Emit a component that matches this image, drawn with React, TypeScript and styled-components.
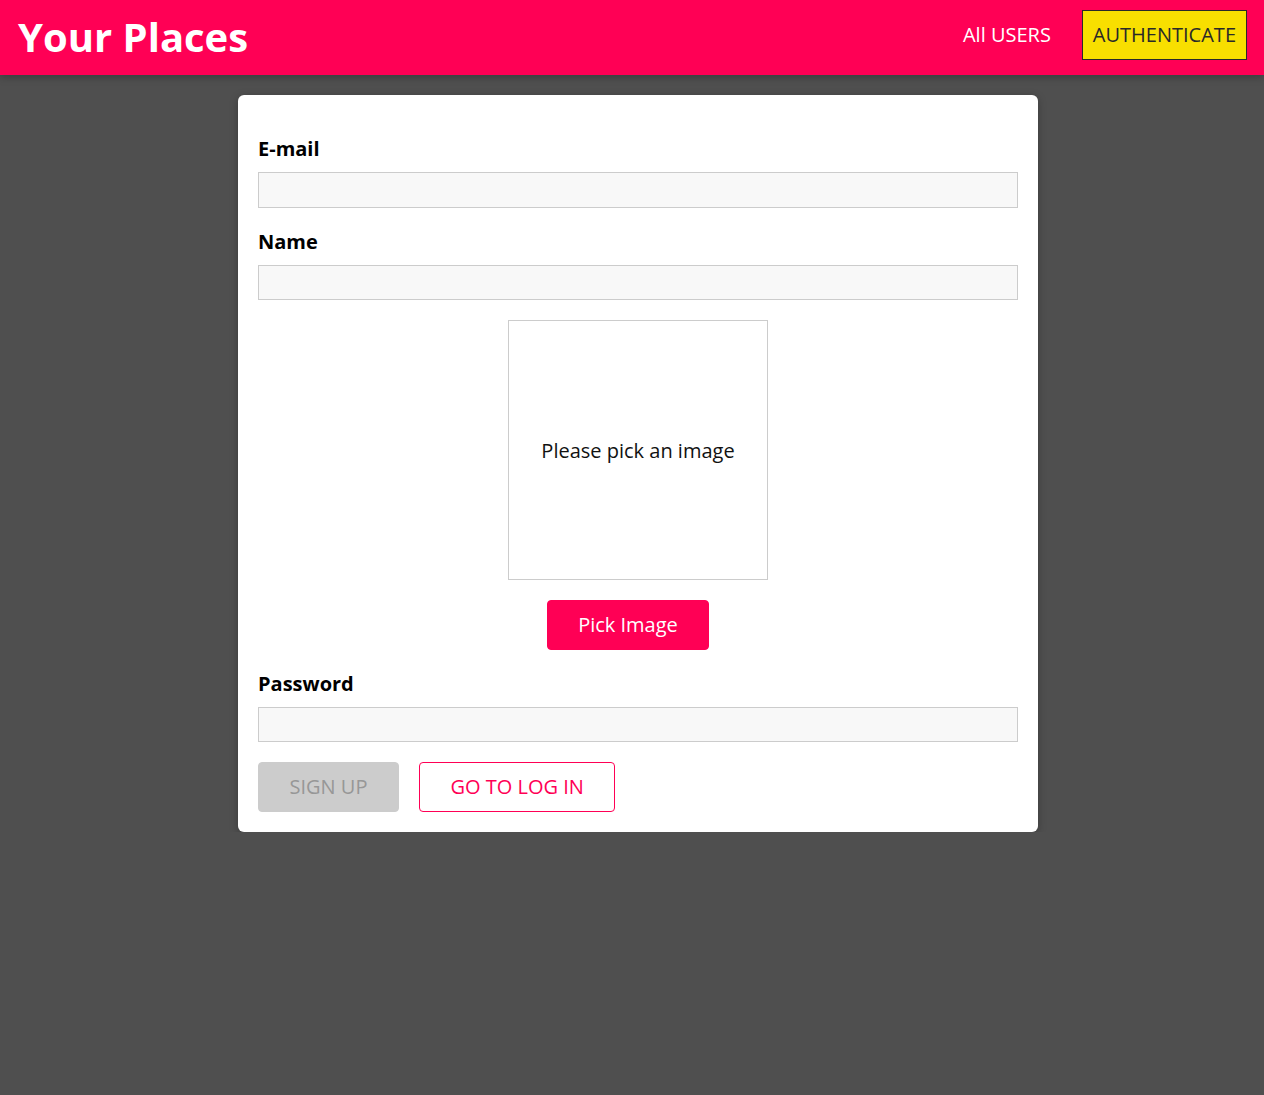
import React from "react";
import styled, { createGlobalStyle } from "styled-components";

const Global = createGlobalStyle`
  html, body { margin: 0; padding: 0; }
  body {
    background: #4f4f4f;
    font-family: "Open Sans", "Noto Sans", sans-serif;
    font-size: 20px;
  }
  * { box-sizing: border-box; }
`;

const Header = styled.header`
  height: 75px;
  background: #ff0055;
  box-shadow: 0 2px 8px rgba(0, 0, 0, 0.26);
  display: flex;
  align-items: center;
  justify-content: space-between;
  padding: 0 17px 0 18px;
`;

const Title = styled.h1`
  margin: 0 0 2px 0;
  color: #ffffff;
  font-size: 40px;
  font-weight: 700;
  line-height: 1.3;
`;

const Nav = styled.nav`
  margin-bottom: 6px;
`;

const NavList = styled.ul`
  list-style: none;
  margin: 0;
  padding: 0;
  display: flex;
  align-items: center;
`;

const NavItem = styled.li`
  margin: 0 10px;
  &:last-child { margin-right: 0; }
`;

const NavLink = styled.a<{ $active?: boolean }>`
  display: block;
  padding: 10px;
  line-height: 28px;
  font-size: 20px;
  text-decoration: none;
  border: 1px solid ${(p) => (p.$active ? "#292929" : "transparent")};
  background: ${(p) => (p.$active ? "#f8df00" : "transparent")};
  color: ${(p) => (p.$active ? "#292929" : "#ffffff")};
`;

const Main = styled.main`
  padding: 20px 0 0 12px;
`;

const Card = styled.div`
  width: 800px;
  margin: 0 auto;
  background: #ffffff;
  border-radius: 6px;
  box-shadow: 0 2px 8px rgba(0, 0, 0, 0.26);
  padding: 40px 20px 20px;
`;

const Form = styled.form`
  display: flex;
  flex-direction: column;
  gap: 20px;
`;

const Control = styled.div`
  display: flex;
  flex-direction: column;
`;

const Label = styled.label`
  font-weight: 700;
  font-size: 20px;
  line-height: 27px;
  margin-bottom: 10px;
  color: #000;
`;

const Input = styled.input<{ $tall?: boolean }>`
  width: 100%;
  height: ${(p) => (p.$tall ? "36px" : "35px")};
  border: 1px solid #ccc;
  background: #f8f8f8;
  font: inherit;
  padding: 2px 4px;
  &:focus { outline: none; }
`;

const ImageUpload = styled.div`
  display: flex;
  flex-direction: column;
  align-items: center;
  gap: 20px;
`;

const Preview = styled.div`
  width: 260px;
  height: 260px;
  border: 1px solid #ccc;
  display: flex;
  align-items: center;
  justify-content: center;
  text-align: center;
  color: #111;
  font-size: 20px;
`;

const Button = styled.button<{ $variant?: "primary" | "inverse" | "disabled" }>`
  font: inherit;
  font-size: 20px;
  line-height: 28px;
  padding: 10px 30.5px;
  border-radius: 4px;
  margin-right: 20px;
  cursor: pointer;
  border: 1px solid
    ${(p) => (p.$variant === "disabled" ? "#ccc" : "#ff0055")};
  background: ${(p) =>
    p.$variant === "primary" ? "#ff0055" : p.$variant === "disabled" ? "#ccc" : "#ffffff"};
  color: ${(p) =>
    p.$variant === "primary" ? "#ffffff" : p.$variant === "disabled" ? "#979797" : "#ff0055"};
`;

const Actions = styled.div`
  display: flex;
`;

export default function App() {
  return (
    <>
      <Global />
      <Header>
        <Title>Your Places</Title>
        <Nav>
          <NavList>
            <NavItem>
              <NavLink href="#">All USERS</NavLink>
            </NavItem>
            <NavItem>
              <NavLink href="#" $active>
                AUTHENTICATE
              </NavLink>
            </NavItem>
          </NavList>
        </Nav>
      </Header>
      <Main>
        <Card>
          <Form onSubmit={(e) => e.preventDefault()}>
            <Control>
              <Label htmlFor="email">E-mail</Label>
              <Input id="email" type="email" $tall />
            </Control>
            <Control>
              <Label htmlFor="name">Name</Label>
              <Input id="name" type="text" />
            </Control>
            <ImageUpload>
              <Preview>Please pick an image</Preview>
              <Button type="button" $variant="primary">
                Pick Image
              </Button>
            </ImageUpload>
            <Control>
              <Label htmlFor="password">Password</Label>
              <Input id="password" type="password" />
            </Control>
            <Actions>
              <Button type="submit" $variant="disabled" disabled>
                SIGN UP
              </Button>
              <Button type="button" $variant="inverse">
                GO TO LOG IN
              </Button>
            </Actions>
          </Form>
        </Card>
      </Main>
    </>
  );
}
